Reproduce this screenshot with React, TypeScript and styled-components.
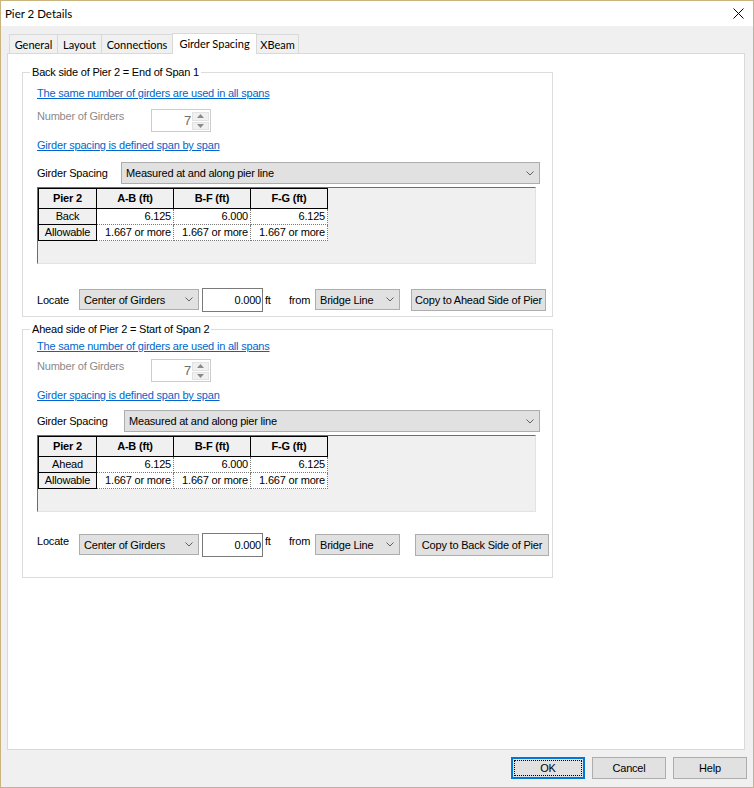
import React from 'react';
import styled, { createGlobalStyle, css } from 'styled-components';

const GlobalStyle = createGlobalStyle`
  html, body { margin: 0; padding: 0; background: #ffffff; }
  body {
    font-family: "Liberation Sans", Arial, sans-serif;
    font-size: 11px;
    letter-spacing: -0.2px;
    color: #000;
  }
  * { box-sizing: border-box; }
`;

const Window = styled.div`
  width: 754px;
  height: 788px;
  border: 1px solid #c9b37e;
  background: #f0f0f0;
  display: flex;
  flex-direction: column;
`;

const TitleBar = styled.div`
  height: 25px;
  flex: none;
  background: #ffffff;
  display: flex;
  align-items: center;
  justify-content: space-between;
  padding: 0 9px 0 4px;
`;

const TitleText = styled.span`
  font-family: Lato, "Open Sans", sans-serif;
  font-size: 11.5px;
  letter-spacing: 0;
  color: #000;
`;

const Body = styled.div`
  flex: 1;
  display: flex;
  flex-direction: column;
  padding-top: 7px;
`;

const TabStrip = styled.div`
  display: flex;
  align-items: flex-end;
  padding-left: 8px;
`;

const Tab = styled.div<{ $width: number; $active?: boolean }>`
  width: ${(p) => p.$width}px;
  height: ${(p) => (p.$active ? 21 : 19)}px;
  margin-right: -1px;
  margin-bottom: ${(p) => (p.$active ? -1 : 0)}px;
  border: 1px solid #d9d9d9;
  border-bottom: none;
  background: ${(p) => (p.$active ? '#ffffff' : '#f0f0f0')};
  position: relative;
  z-index: ${(p) => (p.$active ? 1 : 0)};
  display: flex;
  align-items: center;
  justify-content: center;
  padding-bottom: ${(p) => (p.$active ? 1 : 0)}px;
  font-family: Lato, "Open Sans", sans-serif;
  font-size: 11px;
  letter-spacing: 0;
  color: #000;
  white-space: nowrap;
`;

const Panel = styled.div`
  height: 697px;
  margin: 0 8px 0 6px;
  background: #ffffff;
  border: 1px solid #d9d9d9;
  padding: 18px 0 0 14px;
  display: flex;
  flex-direction: column;
  gap: 12px;
`;

const GroupBox = styled.div<{ $pt: number; $pb: number }>`
  position: relative;
  width: 531px;
  border: 1px solid #dcdcdc;
  padding: ${(p) => p.$pt}px 0 ${(p) => p.$pb}px 14px;
  display: flex;
  flex-direction: column;
  align-items: flex-start;
`;

const Legend = styled.span`
  position: absolute;
  top: -8px;
  left: 7px;
  padding: 0 2px;
  background: #ffffff;
  line-height: 14px;
  white-space: nowrap;
`;

const LinkText = styled.a<{ $mt: number }>`
  display: block;
  margin-top: ${(p) => p.$mt}px;
  line-height: 14px;
  color: #0066cc;
  text-decoration: underline;
  cursor: pointer;
  white-space: nowrap;
`;

const GirdersRow = styled.div<{ $mt: number }>`
  display: flex;
  align-items: flex-start;
  height: 23px;
  margin-top: ${(p) => p.$mt}px;
`;

const DisabledLabel = styled.span`
  width: 114px;
  line-height: 14px;
  color: #8a8a8a;
`;

const SpinBox = styled.div`
  width: 60px;
  height: 23px;
  border: 1px solid #cccccc;
  background: #ffffff;
  display: flex;
`;

const SpinValue = styled.span`
  flex: 1;
  text-align: right;
  padding-right: 1px;
  font-size: 13px;
  line-height: 21px;
  color: #6d6d6d;
`;

const SpinButtons = styled.div`
  width: 18px;
  display: flex;
  flex-direction: column;
  gap: 1px;
  padding: 2px 1px 1px 0;
`;

const SpinButton = styled.div`
  flex: 1;
  background: #f0f0f0;
  border: 1px solid #e2e2e2;
  display: flex;
  align-items: center;
  justify-content: center;
`;

const FieldRow = styled.div<{ $mt: number }>`
  display: flex;
  align-items: center;
  height: 22px;
  margin-top: ${(p) => p.$mt}px;
`;

const FieldLabel = styled.span<{ $width: number }>`
  width: ${(p) => p.$width}px;
  flex: none;
  line-height: 14px;
  white-space: nowrap;
`;

const ComboBox = styled.div<{ $width: number; $height?: number; $ml?: number }>`
  width: ${(p) => p.$width}px;
  height: ${(p) => p.$height ?? 21}px;
  margin-left: ${(p) => p.$ml ?? 0}px;
  flex: none;
  background: #e1e1e1;
  border: 1px solid #adadad;
  display: flex;
  align-items: center;
  justify-content: space-between;
  padding: 0 5px 0 4px;
  white-space: nowrap;
`;

const GridView = styled.div<{ $mt: number }>`
  width: 499px;
  height: 77px;
  margin-top: ${(p) => p.$mt}px;
  background: #f0f0f0;
  border-top: 1px solid #6d6d6d;
  border-left: 1px solid #6d6d6d;
  border-right: 1px solid #e3e3e3;
  border-bottom: 1px solid #e3e3e3;
`;

const GridTable = styled.div`
  display: grid;
  grid-template-columns: 59px 77px 77px 77px;
  grid-template-rows: 21px 16px 16px;
  width: max-content;
`;

type CellKind = 'head' | 'rowhead' | 'data';

const Cell = styled.div<{ $kind: CellKind; $first?: boolean }>`
  display: flex;
  align-items: center;
  white-space: nowrap;
  line-height: 13px;
  ${(p) =>
    p.$kind === 'head' &&
    css`
      background: #f0f0f0;
      border-top: 1px solid #000;
      border-right: 1px solid #000;
      border-bottom: 1px solid #000;
      justify-content: center;
      font-weight: bold;
    `}
  ${(p) =>
    p.$kind === 'rowhead' &&
    css`
      background: #f0f0f0;
      border-right: 1px solid #000;
      border-bottom: 1px solid #000;
      justify-content: center;
    `}
  ${(p) =>
    p.$kind === 'data' &&
    css`
      background: #ffffff;
      border-right: 1px dotted #7a7a7a;
      border-bottom: 1px dotted #7a7a7a;
      justify-content: flex-end;
      padding-right: 2px;
    `}
  ${(p) =>
    p.$first &&
    css`
      border-left: 1px solid #000;
    `}
`;

const LocateRow = styled.div<{ $mt: number; $height: number; $top?: boolean }>`
  display: flex;
  align-items: ${(p) => (p.$top ? 'flex-start' : 'center')};
  height: ${(p) => p.$height}px;
  margin-top: ${(p) => p.$mt}px;
  ${(p) =>
    p.$top &&
    css`
      & > :not(input) {
        margin-top: 1px;
      }
    `}
`;

const NumberInput = styled.input`
  width: 61px;
  height: 24px;
  margin-left: 3px;
  flex: none;
  border: 1px solid #7a7a7a;
  background: #ffffff;
  text-align: right;
  padding: 0 1px 0 0;
  font-family: inherit;
  font-size: 11px;
  letter-spacing: -0.2px;
  color: #000;
  outline: none;
`;

const UnitLabel = styled.span<{ $width: number; $ml?: number }>`
  width: ${(p) => p.$width}px;
  margin-left: ${(p) => p.$ml ?? 0}px;
  flex: none;
  line-height: 14px;
`;

const ActionButton = styled.button<{ $width: number; $ml: number }>`
  width: ${(p) => p.$width}px;
  height: 22px;
  margin-left: ${(p) => p.$ml}px;
  flex: none;
  background: #e1e1e1;
  border: 1px solid #adadad;
  padding: 0;
  font-family: inherit;
  font-size: 11px;
  letter-spacing: -0.2px;
  color: #000;
  white-space: nowrap;
`;

const Footer = styled.div`
  display: flex;
  justify-content: flex-end;
  gap: 7px;
  padding: 7px 6px 8px 0;
`;

const DialogButton = styled.button<{ $default?: boolean }>`
  width: 74px;
  height: 22px;
  background: #e1e1e1;
  border: ${(p) => (p.$default ? '2px solid #0078d7' : '1px solid #adadad')};
  padding: 0;
  font-family: "Liberation Sans", Arial, sans-serif;
  font-size: 11px;
  letter-spacing: -0.2px;
  color: #000;
  ${(p) =>
    p.$default &&
    css`
      outline: 1px dotted #000;
      outline-offset: -4px;
    `}
`;

const CloseIcon = () => (
  <svg width="11" height="11" viewBox="0 0 11 11">
    <path d="M0.5 0.5 L10.5 10.5 M10.5 0.5 L0.5 10.5" stroke="#000" strokeWidth="1" fill="none" />
  </svg>
);

const Chevron = () => (
  <svg width="8" height="5" viewBox="0 0 8 5">
    <path d="M0.5 0.5 L4 4 L7.5 0.5" stroke="#606060" strokeWidth="1" fill="none" />
  </svg>
);

const Arrow = ({ up }: { up?: boolean }) => (
  <svg width="7" height="4" viewBox="0 0 7 4">
    <path d={up ? 'M3.5 0 L7 4 L0 4 Z' : 'M0 0 L7 0 L3.5 4 Z'} fill="#8a8a8a" />
  </svg>
);

type GroupLayout = {
  pt: number;
  pb: number;
  link1: number;
  girders: number;
  link2: number;
  spacing: number;
  spacingLabel: number;
  spacingSelect: number;
  grid: number;
  locate: number;
  locateHeight: number;
  locateTop?: boolean;
  copyGap: number;
  copyWidth: number;
};

type GroupData = {
  title: string;
  rowName: string;
  copyLabel: string;
  layout: GroupLayout;
};

const GROUPS: GroupData[] = [
  {
    title: 'Back side of Pier 2 = End of Span 1',
    rowName: 'Back',
    copyLabel: 'Copy to Ahead Side of Pier',
    layout: {
      pt: 13,
      pb: 4,
      link1: 0,
      girders: 9,
      link2: 6,
      spacing: 10,
      spacingLabel: 84,
      spacingSelect: 419,
      grid: 3,
      locate: 23,
      locateHeight: 25,
      copyGap: 11,
      copyWidth: 135,
    },
  },
  {
    title: 'Ahead side of Pier 2 = Start of Span 2',
    rowName: 'Ahead',
    copyLabel: 'Copy to Back Side of Pier',
    layout: {
      pt: 9,
      pb: 20,
      link1: 0,
      girders: 6,
      link2: 6,
      spacing: 8,
      spacingLabel: 87,
      spacingSelect: 416,
      grid: 3,
      locate: 21,
      locateHeight: 24,
      locateTop: true,
      copyGap: 15,
      copyWidth: 134,
    },
  },
];

const TABS = [
  { label: 'General', width: 49 },
  { label: 'Layout', width: 45 },
  { label: 'Connections', width: 72 },
  { label: 'Girder Spacing', width: 85, active: true },
  { label: 'XBeam', width: 43 },
];

const HEADERS = ['Pier 2', 'A-B (ft)', 'B-F (ft)', 'F-G (ft)'];

const SpacingGrid = ({ rowName, mt }: { rowName: string; mt: number }) => {
  const rows = [
    { name: rowName, values: ['6.125', '6.000', '6.125'] },
    { name: 'Allowable', values: ['1.667 or more', '1.667 or more', '1.667 or more'] },
  ];
  return (
    <GridView $mt={mt}>
      <GridTable>
        {HEADERS.map((h, i) => (
          <Cell key={h} $kind="head" $first={i === 0}>
            {h}
          </Cell>
        ))}
        {rows.map((r) => (
          <React.Fragment key={r.name}>
            <Cell $kind="rowhead" $first>
              {r.name}
            </Cell>
            {r.values.map((v, i) => (
              <Cell key={i} $kind="data">
                {v}
              </Cell>
            ))}
          </React.Fragment>
        ))}
      </GridTable>
    </GridView>
  );
};

const SideGroup = ({ data }: { data: GroupData }) => {
  const L = data.layout;
  return (
    <GroupBox $pt={L.pt} $pb={L.pb}>
      <Legend>{data.title}</Legend>
      <LinkText $mt={L.link1}>The same number of girders are used in all spans</LinkText>
      <GirdersRow $mt={L.girders}>
        <DisabledLabel>Number of Girders</DisabledLabel>
        <SpinBox>
          <SpinValue>7</SpinValue>
          <SpinButtons>
            <SpinButton>
              <Arrow up />
            </SpinButton>
            <SpinButton>
              <Arrow />
            </SpinButton>
          </SpinButtons>
        </SpinBox>
      </GirdersRow>
      <LinkText $mt={L.link2}>Girder spacing is defined span by span</LinkText>
      <FieldRow $mt={L.spacing}>
        <FieldLabel $width={L.spacingLabel}>Girder Spacing</FieldLabel>
        <ComboBox $width={L.spacingSelect} $height={22}>
          <span>Measured at and along pier line</span>
          <Chevron />
        </ComboBox>
      </FieldRow>
      <SpacingGrid rowName={data.rowName} mt={L.grid} />
      <LocateRow $mt={L.locate} $height={L.locateHeight} $top={L.locateTop}>
        <FieldLabel $width={42}>Locate</FieldLabel>
        <ComboBox $width={120}>
          <span>Center of Girders</span>
          <Chevron />
        </ComboBox>
        <NumberInput readOnly value="0.000" />
        <UnitLabel $width={24} $ml={2}>
          ft
        </UnitLabel>
        <UnitLabel $width={26}>from</UnitLabel>
        <ComboBox $width={85}>
          <span>Bridge Line</span>
          <Chevron />
        </ComboBox>
        <ActionButton $width={L.copyWidth} $ml={L.copyGap}>
          {data.copyLabel}
        </ActionButton>
      </LocateRow>
    </GroupBox>
  );
};

export default function App() {
  return (
    <>
      <GlobalStyle />
      <Window>
        <TitleBar>
          <TitleText>Pier 2 Details</TitleText>
          <CloseIcon />
        </TitleBar>
        <Body>
          <TabStrip>
            {TABS.map((t) => (
              <Tab key={t.label} $width={t.width} $active={t.active}>
                {t.label}
              </Tab>
            ))}
          </TabStrip>
          <Panel>
            {GROUPS.map((g) => (
              <SideGroup key={g.title} data={g} />
            ))}
          </Panel>
          <Footer>
            <DialogButton $default>OK</DialogButton>
            <DialogButton>Cancel</DialogButton>
            <DialogButton>Help</DialogButton>
          </Footer>
        </Body>
      </Window>
    </>
  );
}
